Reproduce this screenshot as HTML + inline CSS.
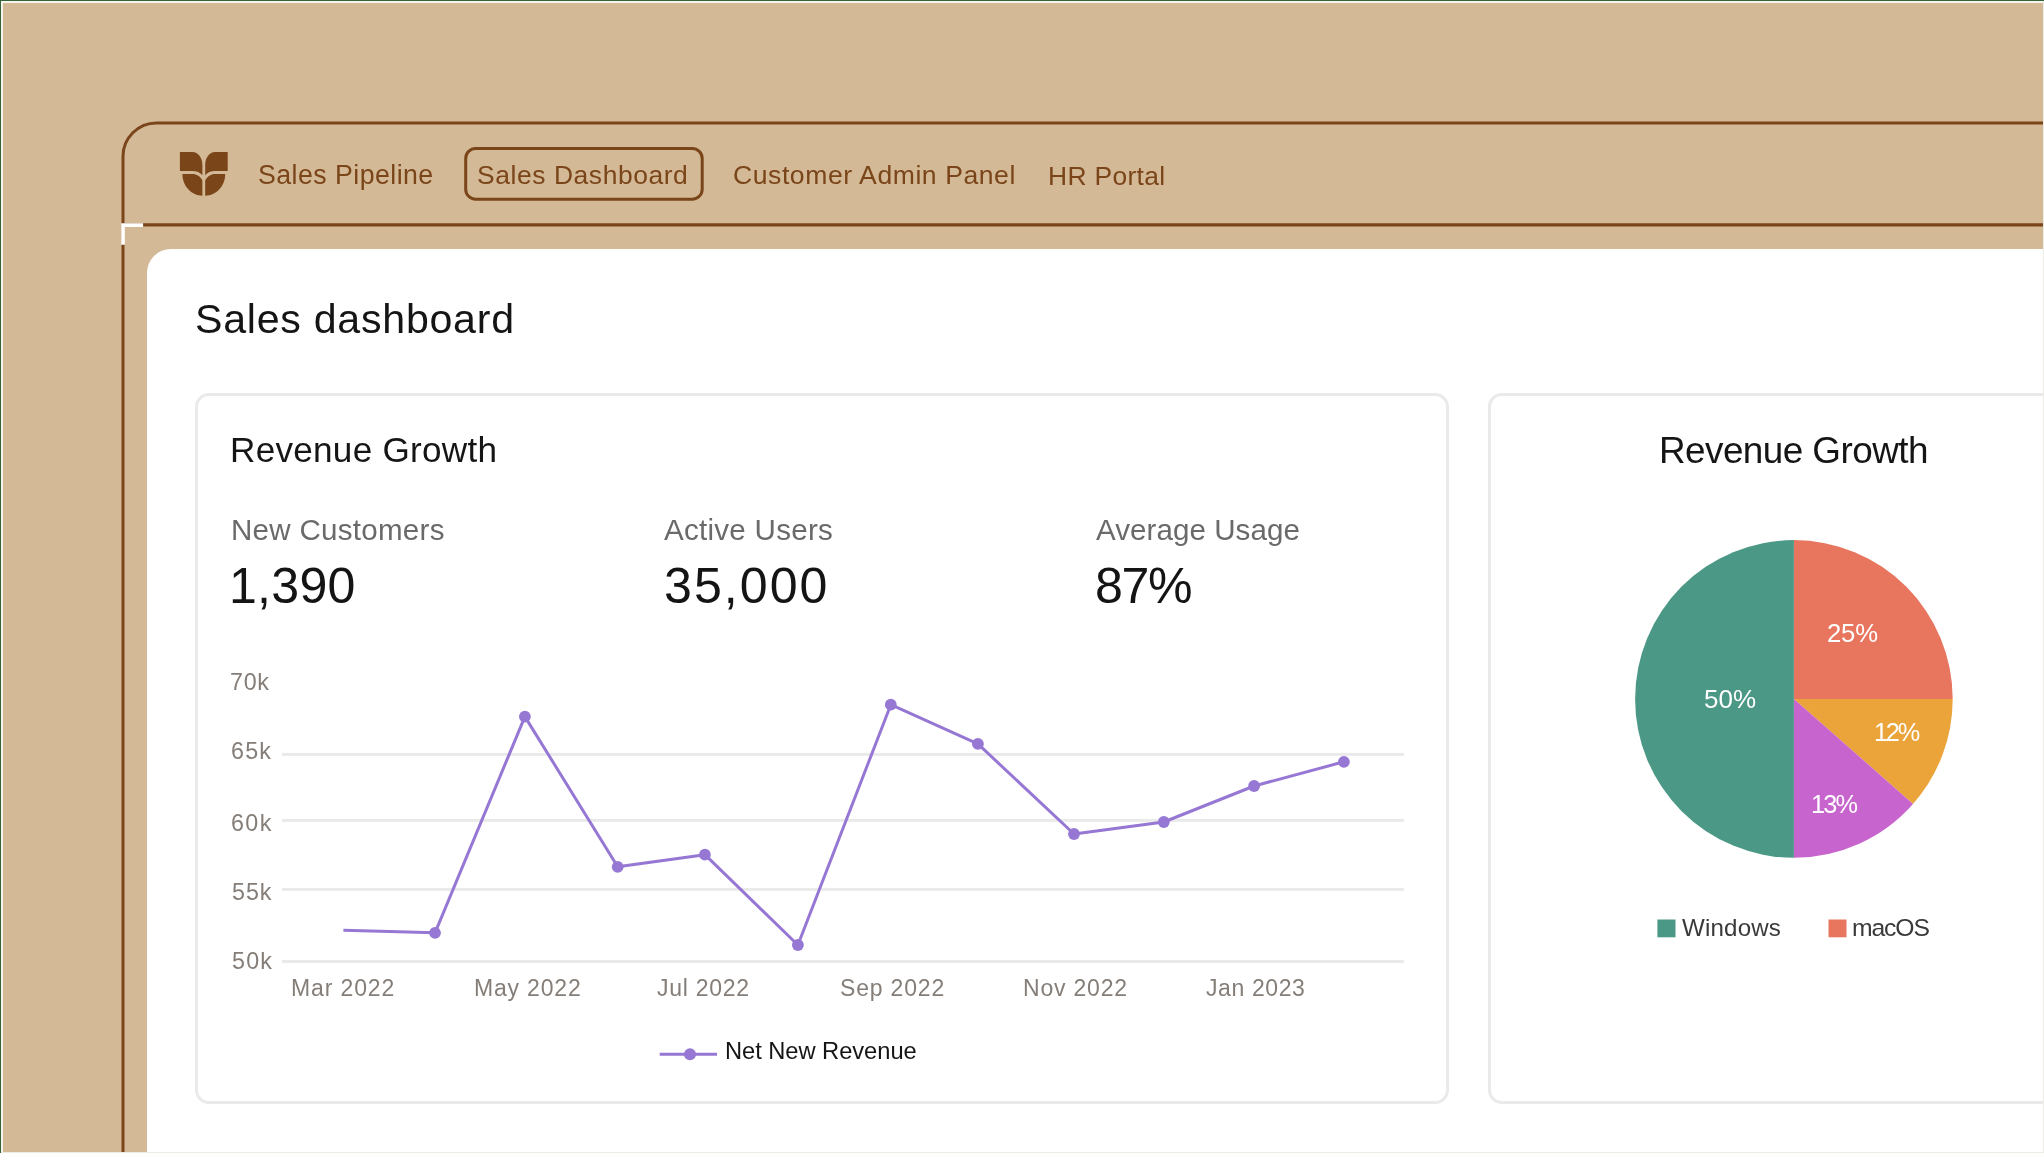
<!DOCTYPE html>
<html><head><meta charset="utf-8"><title>Sales dashboard</title>
<style>
html,body{margin:0;padding:0;}
body{width:2044px;height:1153px;overflow:hidden;position:relative;background:#D4B997;font-family:"Liberation Sans",sans-serif;}
.t{position:absolute;white-space:nowrap;will-change:transform;font-family:"Liberation Sans",sans-serif;font-weight:400;}
.abs{position:absolute;}
svg{position:absolute;left:0;top:0;}
</style></head><body>
<!-- outer window frame -->
<svg width="2044" height="1153" viewBox="0 0 2044 1153">
  <path d="M123,1160 V156.5 A33.5,33.5 0 0 1 156.5,123 H2060" fill="none" stroke="#7A4519" stroke-width="3"/>
  <path d="M123,224.9 H2060" fill="none" stroke="#7A4519" stroke-width="3.2"/>
  <path d="M121.2,223.2 H143.1 V226.9 H124.9 V244.8 H121.2 Z" fill="#FFFFFF"/>
  <g fill="#7A4519">
    <path d="M179.9,152.1 H192.5 C198.2,152.1 202.4,157.8 202.4,165 V175.2 C200.2,172.6 196.8,171 192.5,171 H179.9 Z"/>
    <path d="M182.4,174.1 H192.5 C196.6,174.1 200.3,176.4 202.4,180.6 V195.8 C191.4,195.8 182.4,186.1 182.4,174.1 Z"/>
    <g transform="translate(407.6,0) scale(-1,1)">
      <path d="M179.9,152.1 H192.5 C198.2,152.1 202.4,157.8 202.4,165 V175.2 C200.2,172.6 196.8,171 192.5,171 H179.9 Z"/>
      <path d="M182.4,174.1 H192.5 C196.6,174.1 200.3,176.4 202.4,180.6 V195.8 C191.4,195.8 182.4,186.1 182.4,174.1 Z"/>
    </g>
  </g>
  <rect x="465.7" y="148.5" width="236.5" height="50.7" rx="10" ry="10" fill="none" stroke="#7A4519" stroke-width="3"/>
</svg>
<div class="abs" style="left:147px;top:249px;width:2000px;height:1000px;background:#FFFFFF;border-top-left-radius:24px;"></div>
<div class="abs" style="left:195px;top:393px;width:1254px;height:711px;box-sizing:border-box;border:3px solid #EAEAEA;border-radius:14px;"></div>
<div class="abs" style="left:1488px;top:393px;width:612px;height:711px;box-sizing:border-box;border:3px solid #EAEAEA;border-radius:14px;"></div>
<svg width="2044" height="1153" viewBox="0 0 2044 1153">
<rect x="282" y="752.9" width="1122" height="3" fill="#EAEAEA"/>
<rect x="282" y="818.9" width="1122" height="3" fill="#EAEAEA"/>
<rect x="282" y="887.9" width="1122" height="3" fill="#EAEAEA"/>
<rect x="282" y="960.0" width="1122" height="3" fill="#EAEAEA"/>
<path d="M343.4,930.2 L435.0,932.8 L524.9,716.6 L617.7,866.8 L704.9,854.7 L797.9,945.0 L890.8,704.7 L977.9,743.9 L1074.0,834.0 L1163.8,822.0 L1254.1,786.0 L1343.9,761.8" fill="none" stroke="#9677D4" stroke-width="3" stroke-linejoin="round"/>
<circle cx="435.0" cy="932.8" r="5.9" fill="#9677D4"/>
<circle cx="524.9" cy="716.6" r="5.9" fill="#9677D4"/>
<circle cx="617.7" cy="866.8" r="5.9" fill="#9677D4"/>
<circle cx="704.9" cy="854.7" r="5.9" fill="#9677D4"/>
<circle cx="797.9" cy="945.0" r="5.9" fill="#9677D4"/>
<circle cx="890.8" cy="704.7" r="5.9" fill="#9677D4"/>
<circle cx="977.9" cy="743.9" r="5.9" fill="#9677D4"/>
<circle cx="1074.0" cy="834.0" r="5.9" fill="#9677D4"/>
<circle cx="1163.8" cy="822.0" r="5.9" fill="#9677D4"/>
<circle cx="1254.1" cy="786.0" r="5.9" fill="#9677D4"/>
<circle cx="1343.9" cy="761.8" r="5.9" fill="#9677D4"/>
<path d="M659.7,1054.2 H717" stroke="#9677D4" stroke-width="3"/>
<circle cx="690" cy="1054.2" r="6" fill="#9677D4"/>
<path d="M1793.9,698.9 L1793.90,540.10 A158.8,158.8 0 0 1 1952.70,698.90 Z" fill="#E8765F"/>
<path d="M1793.9,698.9 L1952.70,698.90 A158.8,158.8 0 0 1 1913.02,803.92 Z" fill="#EAA43A"/>
<path d="M1793.9,698.9 L1913.02,803.92 A158.8,158.8 0 0 1 1793.90,857.70 Z" fill="#C864CD"/>
<path d="M1793.9,698.9 L1793.90,857.70 A158.8,158.8 0 0 1 1793.90,540.10 Z" fill="#4C9886"/>
<rect x="1657.4" y="919.5" width="18.1" height="17.8" fill="#4C9886"/>
<rect x="1828.5" y="919.5" width="18" height="17.8" fill="#E8765F"/>
</svg>
<div id="nav1" class="t" style="left:258.10px;top:162px;font-size:26.71px;line-height:26.71px;letter-spacing:0.459px;color:#7A4519">Sales Pipeline</div>
<div id="nav2" class="t" style="left:477.31px;top:162px;font-size:26.43px;line-height:26.43px;letter-spacing:0.580px;color:#7A4519">Sales Dashboard</div>
<div id="nav3" class="t" style="left:732.77px;top:162px;font-size:26.57px;line-height:26.57px;letter-spacing:0.562px;color:#7A4519">Customer Admin Panel</div>
<div id="nav4" class="t" style="left:1047.92px;top:163px;font-size:26.43px;line-height:26.43px;letter-spacing:0.324px;color:#7A4519">HR Portal</div>
<div id="h1" class="t" style="left:194.75px;top:299px;font-size:41.14px;line-height:41.14px;letter-spacing:0.740px;color:#151515">Sales dashboard</div>
<div id="t1" class="t" style="left:230.30px;top:432px;font-size:35.14px;line-height:35.14px;letter-spacing:0.266px;color:#151515">Revenue Growth</div>
<div id="s1" class="t" style="left:230.66px;top:515px;font-size:29.57px;line-height:29.57px;letter-spacing:0.263px;color:#6A6A6A">New Customers</div>
<div id="s2" class="t" style="left:663.93px;top:515px;font-size:29.57px;line-height:29.57px;letter-spacing:0.259px;color:#6A6A6A">Active Users</div>
<div id="s3" class="t" style="left:1096.23px;top:515px;font-size:29.57px;line-height:29.57px;letter-spacing:0.053px;color:#6A6A6A">Average Usage</div>
<div id="v1" class="t" style="left:228.54px;top:561px;font-size:50.14px;line-height:50.14px;letter-spacing:0.241px;color:#141414">1,390</div>
<div id="v2" class="t" style="left:663.52px;top:561px;font-size:50.14px;line-height:50.14px;letter-spacing:2.031px;color:#141414">35,000</div>
<div id="v3" class="t" style="left:1095.07px;top:561px;font-size:50.14px;line-height:50.14px;letter-spacing:-1.410px;color:#141414">87%</div>
<div id="y70" class="t" style="left:230.24px;top:671px;font-size:23.29px;line-height:23.29px;letter-spacing:0.705px;color:#857E78">70k</div>
<div id="y65" class="t" style="left:231.04px;top:740px;font-size:23.29px;line-height:23.29px;letter-spacing:1.205px;color:#857E78">65k</div>
<div id="y60" class="t" style="left:231.34px;top:812px;font-size:23.29px;line-height:23.29px;letter-spacing:1.405px;color:#857E78">60k</div>
<div id="y55" class="t" style="left:231.57px;top:881px;font-size:23.29px;line-height:23.29px;letter-spacing:0.938px;color:#857E78">55k</div>
<div id="y50" class="t" style="left:231.57px;top:950px;font-size:23.29px;line-height:23.29px;letter-spacing:1.188px;color:#857E78">50k</div>
<div id="x1" class="t" style="left:290.60px;top:977px;font-size:23.0px;line-height:23.0px;letter-spacing:0.876px;color:#857E78">Mar 2022</div>
<div id="x2" class="t" style="left:473.80px;top:977px;font-size:23.0px;line-height:23.0px;letter-spacing:0.811px;color:#857E78">May 2022</div>
<div id="x3" class="t" style="left:656.86px;top:977px;font-size:23.0px;line-height:23.0px;letter-spacing:0.722px;color:#857E78">Jul 2022</div>
<div id="x4" class="t" style="left:839.87px;top:977px;font-size:23.0px;line-height:23.0px;letter-spacing:0.821px;color:#857E78">Sep 2022</div>
<div id="x5" class="t" style="left:1023.00px;top:977px;font-size:23.0px;line-height:23.0px;letter-spacing:0.801px;color:#857E78">Nov 2022</div>
<div id="x6" class="t" style="left:1206.15px;top:977px;font-size:23.0px;line-height:23.0px;letter-spacing:0.605px;color:#857E78">Jan 2023</div>
<div id="lg1" class="t" style="left:725.24px;top:1040px;font-size:23.71px;line-height:23.71px;letter-spacing:-0.046px;color:#151515">Net New Revenue</div>
<div id="t2" class="t" style="left:1659.26px;top:433px;font-size:36.86px;line-height:36.86px;letter-spacing:-0.554px;color:#151515">Revenue Growth</div>
<div id="p25" class="t" style="left:1826.71px;top:621px;font-size:25.71px;line-height:25.71px;letter-spacing:-0.199px;color:#FFFFFF">25%</div>
<div id="p50" class="t" style="left:1703.96px;top:686px;font-size:26.0px;line-height:26.0px;letter-spacing:0.043px;color:#FFFFFF">50%</div>
<div id="p12" class="t" style="left:1874.40px;top:720px;font-size:25.29px;line-height:25.29px;letter-spacing:-2.231px;color:#FFFFFF">12%</div>
<div id="p13" class="t" style="left:1811.00px;top:792px;font-size:25.29px;line-height:25.29px;letter-spacing:-1.781px;color:#FFFFFF">13%</div>
<div id="lg2" class="t" style="left:1682.18px;top:916px;font-size:24.14px;line-height:24.14px;letter-spacing:0.170px;color:#3A3A3A">Windows</div>
<div id="lg3" class="t" style="left:1852.33px;top:916px;font-size:24.71px;line-height:24.71px;letter-spacing:-1.107px;color:#3A3A3A">macOS</div>
<!-- screenshot edge artifacts -->
<div class="abs" style="left:0;top:0;width:2044px;height:1px;background:#34643C"></div>
<div class="abs" style="left:0;top:0;width:1px;height:1153px;background:#34643C"></div>
<div class="abs" style="left:1px;top:1px;width:2043px;height:2px;background:#F6F3EA"></div>
<div class="abs" style="left:1px;top:1px;width:2px;height:1152px;background:#F6F3EA"></div>
<div class="abs" style="left:2043px;top:1px;width:1px;height:1152px;background:#ECECE4"></div>
<div class="abs" style="left:1px;top:1152px;width:2043px;height:1px;background:#ECECE4"></div>
</body></html>
